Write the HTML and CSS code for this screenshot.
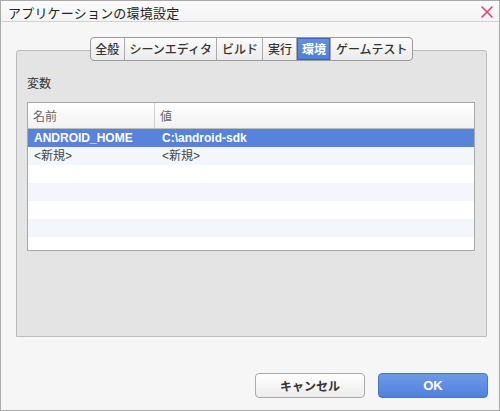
FILE: index.html
```html
<!DOCTYPE html>
<html lang="ja">
<head>
<meta charset="utf-8">
<title>アプリケーションの環境設定</title>
<link rel="stylesheet" href="styles.css">
</head>
<body>
<div class="window">
  <div class="titlebar">
    <span class="title">アプリケーションの環境設定</span>
    <svg class="close" width="12" height="12" viewBox="0 0 12 12"><path d="M1 1 L11 11 M11 1 L1 11" stroke="#e8406e" stroke-width="1.6" stroke-linecap="round" fill="none"/></svg>
  </div>
  <div class="content">
    <div class="tabs">
      <span class="tab">全般</span>
      <span class="tab">シーンエディタ</span>
      <span class="tab">ビルド</span>
      <span class="tab">実行</span>
      <span class="tab active">環境</span>
      <span class="tab">ゲームテスト</span>
    </div>
    <div class="panel">
      <div class="label">変数</div>
      <div class="grid">
        <div class="row head">
          <div class="cell c1">名前</div>
          <div class="cell c2">値</div>
        </div>
        <div class="row selected">
          <div class="cell c1">ANDROID_HOME</div>
          <div class="cell c2">C:\android-sdk</div>
        </div>
        <div class="row alt">
          <div class="cell c1">&lt;新規&gt;</div>
          <div class="cell c2">&lt;新規&gt;</div>
        </div>
        <div class="row"></div>
        <div class="row alt"></div>
        <div class="row"></div>
        <div class="row alt"></div>
        <div class="row"></div>
      </div>
    </div>
    <div class="buttons">
      <button class="btn cancel">キャンセル</button>
      <button class="btn ok">OK</button>
    </div>
  </div>
</div>
</body>
</html>
```

FILE: styles.css
```css
html, body {
  margin: 0;
  padding: 0;
  background: #f6f6f6;
}
body {
  font-family: "Liberation Sans", "Noto Sans CJK JP", sans-serif;
  color: #333;
}
.window {
  width: 500px;
  height: 411px;
  box-sizing: border-box;
  border: 1px solid #a9a9a9;
  background: #f6f6f6;
  display: flex;
  flex-direction: column;
}
.titlebar {
  height: 20px;
  border-bottom: 1px solid #d2d2d2;
  background: linear-gradient(#fbfbfb, #f3f3f3);
  display: flex;
  align-items: center;
  padding: 0 6px 0 7px;
}
.title {
  flex: 1;
  font-family: "Noto Sans CJK JP", sans-serif;
  font-size: 13px;
  line-height: 20px;
  padding-top: 3px;
  color: #222;
  letter-spacing: 0.2px;
}
.close {
  display: block;
  margin-top: 1px;
}
.content {
  flex: 1;
  display: flex;
  flex-direction: column;
  padding: 15px 12px 0 15px;
}
.tabs {
  align-self: center;
  display: flex;
  position: relative;
  z-index: 1;
  height: 24px;
  box-sizing: border-box;
  border: 1px solid #9a9a9a;
  border-radius: 4px;
  background: linear-gradient(#fbfbfb, #ececec);
  margin-bottom: -11px;
  overflow: hidden;
}
.tab {
  font-family: "Noto Sans CJK JP", sans-serif;
  font-size: 12px;
  line-height: 22px;
  padding: 0 4.5px;
  color: #333;
  border-right: 1px solid #aaa;
  font-weight: 500;
}
.tab:last-child {
  border-right: none;
}
.tab.active {
  background: linear-gradient(#6690e0, #4f7dd6);
  color: #fff;
  box-shadow: inset 0 0 0 1px #3d64b8;
  font-weight: 700;
}
.panel {
  height: 287px;
  box-sizing: border-box;
  border: 1px solid #bcbcbc;
  border-radius: 3px 3px 0 0;
  background: #e4e4e4;
  padding: 24px 11px 0 10px;
}
.label {
  font-family: "Noto Sans CJK JP", sans-serif;
  font-size: 12px;
  line-height: 16px;
  color: #333;
  margin-bottom: 11px;
}
.grid {
  height: 149px;
  box-sizing: border-box;
  border: 1px solid #a8a8a8;
  background: #fff;
  overflow: hidden;
}
.row {
  height: 18px;
  display: flex;
  font-size: 12px;
  line-height: 18px;
}
.row.head {
  height: 26px;
  box-sizing: border-box;
  border-bottom: 1px solid #bdbdbd;
  background: linear-gradient(#ffffff, #f2f2f2);
  line-height: 25px;
  color: #666;
  font-family: "Noto Sans CJK JP", sans-serif;
}
.row.head .c1 {
  border-right: 1px solid #d0d0d0;
  width: 127px;
  padding-left: 5px;
}
.row.head .c2 {
  padding-left: 5px;
}
.cell {
  box-sizing: border-box;
}
.c1 {
  width: 128px;
  padding-left: 6px;
}
.c2 {
  flex: 1;
  padding-left: 6px;
}
.row.alt {
  background: #f3f7fb;
}
.row.selected {
  background: #5783d8;
  color: #fff;
  font-weight: 700;
}
.row.alt .cell {
  color: #444;
}
.buttons {
  display: flex;
  justify-content: flex-end;
  gap: 13px;
  margin-top: 36px;
  margin-right: -1px;
}
.btn {
  width: 110px;
  height: 25px;
  box-sizing: border-box;
  border-radius: 4px;
  font-family: "Liberation Sans", "Noto Sans CJK JP", sans-serif;
  font-size: 12px;
  padding: 0;
  cursor: default;
}
.btn.cancel {
  border: 1px solid #a9a9a9;
  background: linear-gradient(#ffffff, #ececec);
  color: #333;
  font-weight: 700;
}
.btn.ok {
  border: 1px solid #4a74c9;
  background: linear-gradient(#6f9aea, #5180db);
  color: #fff;
  font-weight: 700;
  font-size: 13px;
}
```
